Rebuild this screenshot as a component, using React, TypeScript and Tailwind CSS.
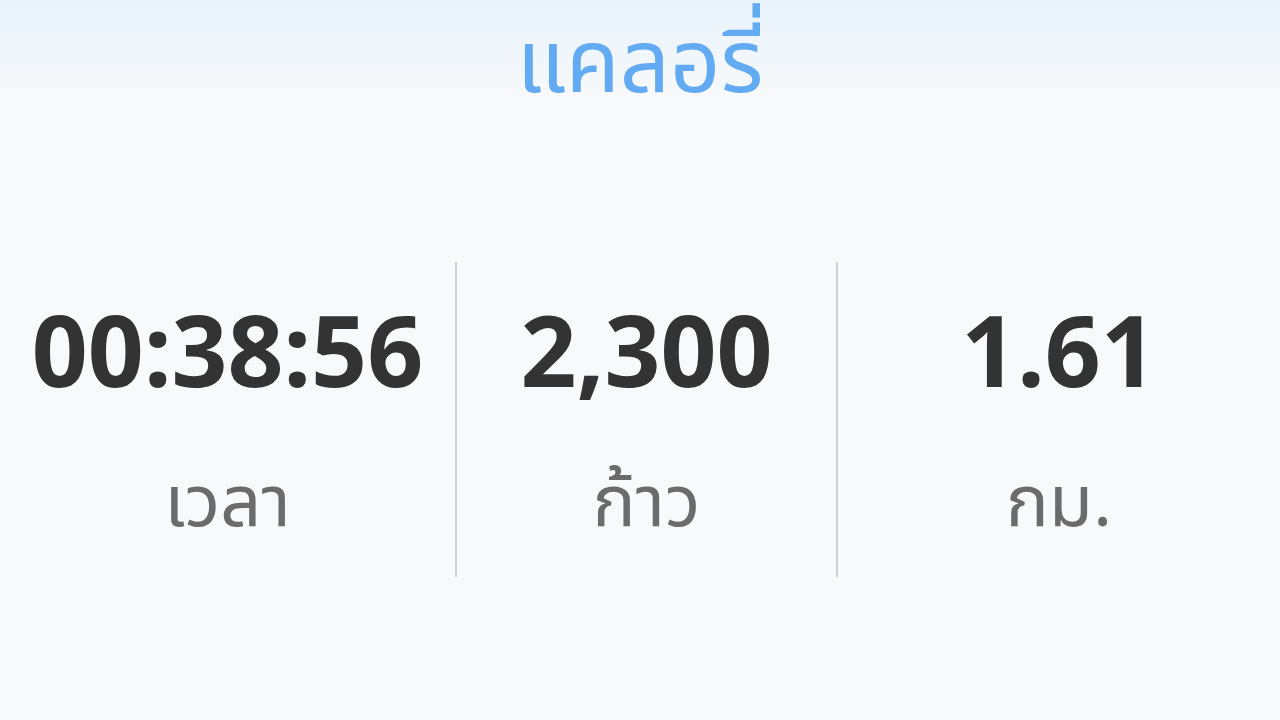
export default function App() {
  const font = { fontFamily: '"Noto Sans", "Noto Sans Thai", sans-serif' };
  const stats = [
    { value: "00:38:56", label: "เวลา" },
    { value: "2,300", label: "ก้าว" },
    { value: "1.61", label: "กม." },
  ];
  return (
    <div
      className="w-[1280px] h-[720px] overflow-hidden bg-gradient-to-b from-[#e8f3fb] via-[#f8f9fb] via-[14%] to-[#f8f9fb] flex flex-col"
      style={font}
    >
      <div className="h-[130px] flex justify-center">
        <div className="text-[#62aaf2] text-[88px] leading-[1.3] mt-[1px]">แคลอรี่</div>
      </div>
      <div className="grid grid-cols-[455px_381px_1fr] mt-[132px]">
        {stats.map((s, i) => (
          <div
            key={i}
            className={`h-[315px] flex flex-col items-center ${i > 0 ? "border-l-2 border-[#d0d0d0]" : ""}`}
          >
            <div className="text-[#333333] font-bold text-[98px] leading-none mt-[38px]">{s.value}</div>
            <div className="text-[#6b6b6b] text-[72px] leading-none mt-[64px]">{s.label}</div>
          </div>
        ))}
      </div>
    </div>
  );
}
